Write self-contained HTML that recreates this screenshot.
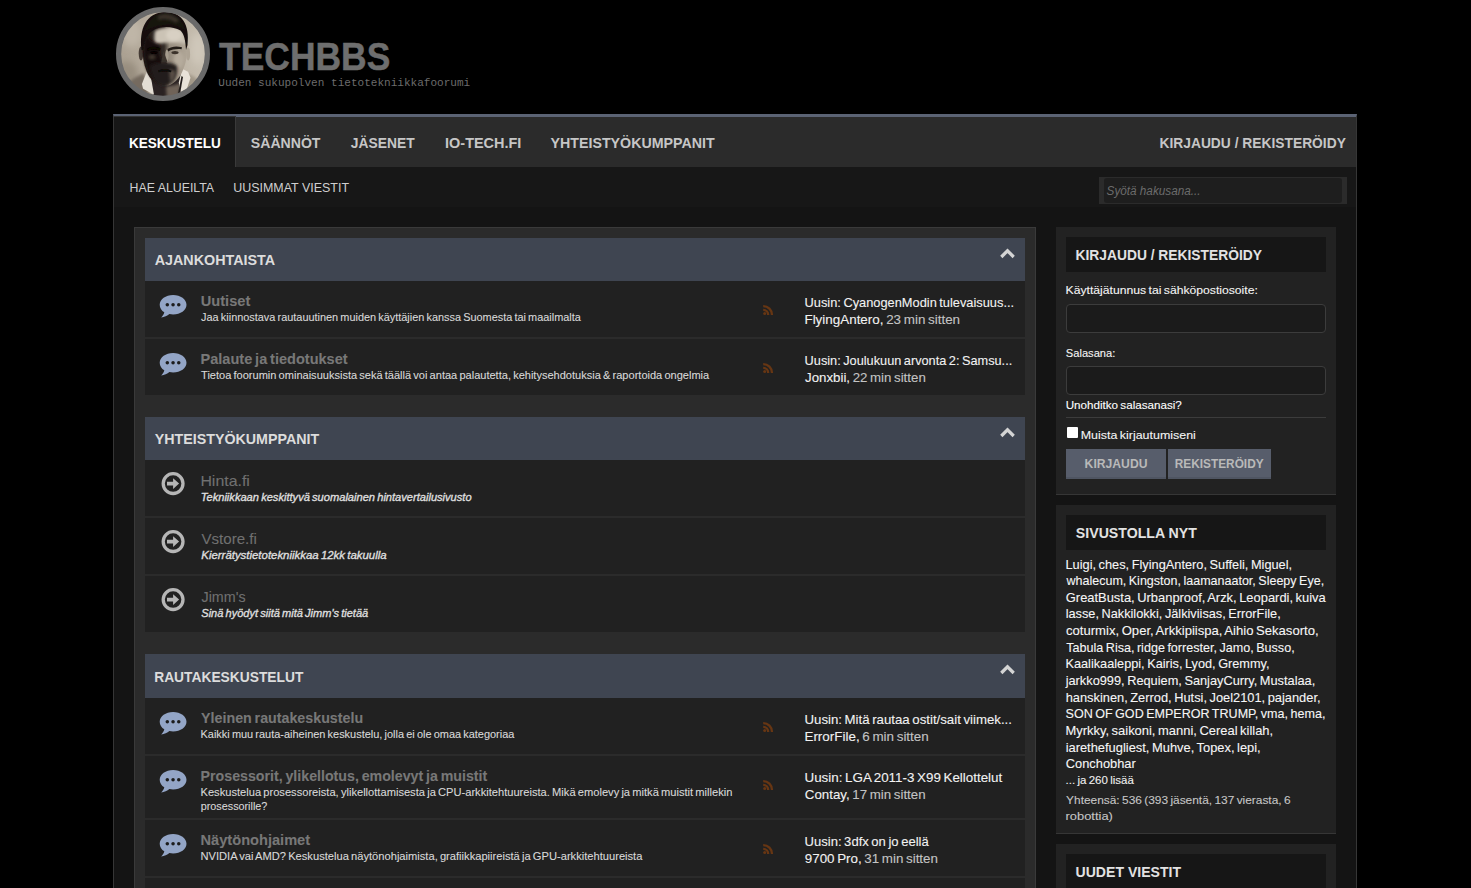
<!DOCTYPE html><html lang="fi"><head><meta charset="utf-8"><title>TechBBS</title><style>

html,body{margin:0;padding:0}
body{width:1471px;height:888px;overflow:hidden;background:#000;position:relative;font-family:"Liberation Sans", sans-serif;}
#pg{position:absolute;left:0;top:0;width:1471px;height:888px;overflow:hidden}
#pg>div,#pg>svg{position:absolute;display:block}
.t{position:absolute;white-space:nowrap;line-height:1;transform-origin:0 0;display:block}
.m{font-family:"Liberation Mono", monospace}
.l{word-spacing:-.08em;-webkit-text-stroke:.1px currentColor}

</style></head><body><div id="pg">
<div style="left:113px;top:114px;width:1244px;height:774px;background:#141414;border-top:3px solid #5b6374;box-sizing:border-box;border-left:1px solid #363636;border-right:1px solid #363636"></div>
<div style="left:114px;top:117px;width:1242px;height:50px;background:#2b2b2b;"></div>
<div style="left:114px;top:116px;width:122px;height:51px;background:#171717;border-top:1px solid #333;border-right:1px solid #3a3a3a;box-sizing:border-box"></div>
<div style="left:114px;top:167px;width:1242px;height:40px;background:#171717;"></div>
<div style="left:1099px;top:177px;width:248px;height:27px;background:#2b2b2b;"></div>
<div style="left:1104px;top:178px;width:238px;height:25px;background:#1e1e1e;border-radius:3px"></div>
<div style="left:134px;top:227px;width:902px;height:700px;background:#2b2b2b;border:1px solid #3a3a3a;box-sizing:border-box"></div>
<div style="left:145px;top:238px;width:880px;height:43px;background:#3f4551;"></div>
<div style="left:145px;top:281px;width:880px;height:56px;background:#212121;"></div>
<div style="left:145px;top:339px;width:880px;height:56px;background:#212121;"></div>
<div style="left:145px;top:417px;width:880px;height:43px;background:#3f4551;"></div>
<div style="left:145px;top:460px;width:880px;height:56px;background:#212121;"></div>
<div style="left:145px;top:518px;width:880px;height:56px;background:#212121;"></div>
<div style="left:145px;top:576px;width:880px;height:56px;background:#212121;"></div>
<div style="left:145px;top:654px;width:880px;height:44px;background:#3f4551;"></div>
<div style="left:145px;top:698px;width:880px;height:56px;background:#212121;"></div>
<div style="left:145px;top:756px;width:880px;height:62px;background:#212121;"></div>
<div style="left:145px;top:820px;width:880px;height:56px;background:#212121;"></div>
<div style="left:145px;top:878px;width:880px;height:20px;background:#212121;"></div>
<div style="left:1056px;top:227px;width:280px;height:267px;background:#222222;border-bottom:1px solid #363636"></div>
<div style="left:1066px;top:237px;width:260px;height:35px;background:#161616;"></div>
<div style="left:1066px;top:304px;width:260px;height:29px;background:#1b1b1b;border:1px solid #3c3c3c;border-radius:4px;box-sizing:border-box"></div>
<div style="left:1066px;top:366px;width:260px;height:29px;background:#1b1b1b;border:1px solid #3c3c3c;border-radius:4px;box-sizing:border-box"></div>
<div style="left:1066px;top:417px;width:260px;height:1px;background:#3c3c3c;"></div>
<div style="left:1067px;top:427px;width:11px;height:11px;background:#fff;border-radius:1px"></div>
<div style="left:1066px;top:449px;width:100px;height:30px;background:#575d6b;border-bottom:2px solid #4f5562;box-sizing:border-box"></div>
<div style="left:1168px;top:449px;width:103px;height:30px;background:#575d6b;border-bottom:2px solid #4f5562;box-sizing:border-box"></div>
<div style="left:1056px;top:505px;width:280px;height:328px;background:#222222;border-bottom:1px solid #363636"></div>
<div style="left:1066px;top:515px;width:260px;height:35px;background:#161616;"></div>
<div style="left:1056px;top:844px;width:280px;height:60px;background:#222222;border-bottom:1px solid #363636"></div>
<div style="left:1066px;top:854px;width:260px;height:35px;background:#161616;"></div>
<svg style="left:116px;top:7px" width="94" height="94" viewBox="0 0 94 94">
<defs>
<clipPath id="avc"><circle cx="47" cy="47" r="42.500"/></clipPath>
<filter id="fb1" x="-30%" y="-30%" width="160%" height="160%"><feGaussianBlur stdDeviation="0.700"/></filter>
<filter id="fb2" x="-30%" y="-30%" width="160%" height="160%"><feGaussianBlur stdDeviation="1.500"/></filter>
<filter id="fb3" x="-30%" y="-30%" width="160%" height="160%"><feGaussianBlur stdDeviation="3.500"/></filter>
<linearGradient id="bgg" x1="0" x2="1" y1="0" y2="0"><stop offset="0" stop-color="#a99f90"/><stop offset=".35" stop-color="#b5ab9c"/><stop offset="1" stop-color="#c8c0b2"/></linearGradient>
<linearGradient id="fcg" x1="0" x2="1" y1="0" y2="0"><stop offset="0" stop-color="#241e1a"/><stop offset=".48" stop-color="#332b26"/><stop offset=".6" stop-color="#968c7e"/><stop offset="1" stop-color="#b1a798"/></linearGradient>
</defs>
<g clip-path="url(#avc)">
<rect width="94" height="94" fill="url(#bgg)"/>
<ellipse cx="16" cy="26" rx="10" ry="14" fill="#bfb6a7" filter="url(#fb3)"/>
<ellipse cx="10" cy="68" rx="12" ry="14" fill="#988e7f" filter="url(#fb3)"/>
<ellipse cx="82" cy="42" rx="8" ry="16" fill="#cfc7ba" filter="url(#fb3)"/>
<!-- shoulders -->
<path d="M6 94c1-12 6-20 14-24l8-4 6 28z" fill="#746a5e" filter="url(#fb2)"/>
<path d="M68 65l7 3c8 3 11 12 13 26h-26z" fill="#a39989" filter="url(#fb2)"/>
<!-- neck / chest -->
<path d="M34 68l4 26h24l6-28z" fill="#2a2420" filter="url(#fb1)"/>
<path d="M50 79l1 15h10l5-19c-5 3-10 4-16 4z" fill="#6f6459" filter="url(#fb2)"/>
<!-- collar -->
<path d="M25.900 76.900l4.900-12.200 4.200 6.100 3 17-10.900-6.100z" fill="#e4ded4" filter="url(#fb1)"/>
<path d="M66 61.700l6.100 3 2.400 6.100-3.600 10.900-6.100 3.700-2-10z" fill="#e8e2d8" filter="url(#fb1)"/>
<path d="M62 87l3.500-18 1.500 1-3 17z" fill="#241f1b" filter="url(#fb1)"/>
<!-- ears -->
<ellipse cx="25" cy="46.500" rx="2.300" ry="7" fill="#453b34" filter="url(#fb1)"/>
<ellipse cx="72.200" cy="47" rx="1.900" ry="6.600" fill="#aea495" filter="url(#fb1)"/>
<!-- face -->
<path d="M26.500 40c0-14 9-24 22-24s23 10 23 24c0 8-1.500 16-4.500 23-3 8-10 16-18.500 16s-15-7-18-15c-3-7-4-15-4-24z" fill="url(#fcg)" filter="url(#fb1)"/>
<!-- forehead + cheek light -->
<path d="M39 24c6-4 18-5 27-1 3 4 4 9 4 14-9-2-20-2-31 1-1-5-1-10 0-14z" fill="#cbc3b5" filter="url(#fb2)"/>
<ellipse cx="58" cy="28" rx="8" ry="6" fill="#d8d0c3" filter="url(#fb2)"/>
<ellipse cx="63" cy="53" rx="5" ry="8.500" fill="#b5ab9c" filter="url(#fb2)"/>
<ellipse cx="51" cy="49" rx="1.800" ry="6.500" fill="#a69c8d" filter="url(#fb1)"/>
<!-- deep shadow on left half -->
<path d="M27.500 41c0-5 1-9 3-13l5 6 9 4-1 8 4 11-4 5 1 15c-6-2-11-8-14-16-2-6-3-13-3-20z" fill="#15110e" filter="url(#fb2)"/>
<ellipse cx="36" cy="50" rx="3.500" ry="2.500" fill="#40372f" filter="url(#fb2)"/>
<!-- brows / eyes -->
<path d="M31 41.800c4-2.600 9-2.600 13.500-.5l-.5 2.500c-4-1.500-8.500-1.500-12.500 0z" fill="#090706" filter="url(#fb1)"/>
<path d="M51.500 42c4-2.800 9.500-3.200 14.500-1.700l-.5 2c-4.500-.5-9 0-13.500 2.200z" fill="#221c18" filter="url(#fb1)"/>
<ellipse cx="38" cy="45.600" rx="3.600" ry="1.500" fill="#070605" filter="url(#fb1)"/>
<ellipse cx="59" cy="45.600" rx="3.600" ry="1.700" fill="#3a312a" filter="url(#fb1)"/>
<!-- nose -->
<path d="M47.500 44l-2.500 12.500 3.500 1.500 3.500-1.500-1-3z" fill="#3e352e" filter="url(#fb1)"/>
<ellipse cx="52.500" cy="55.500" rx="1.800" ry="1.400" fill="#978d7f" filter="url(#fb1)"/>
<!-- beard + mouth -->
<path d="M34 59c4-2.500 9-3.500 14.500-3.500s9.500 1 12.500 3.500c1 9-3 18-12.500 20-8 0-13.500-10-14.500-20z" fill="#241e1a" filter="url(#fb2)"/>
<path d="M53 62.500c3 0 5.500 1 6.500 2 0 5-2 9-5 11-1-4-1-9-1.500-13z" fill="#5a5046" filter="url(#fb2)"/>
<path d="M42 63.500c4-1.800 9.500-1.800 13.500 0l-.5 1.800c-4-1-8.500-1-12.500 0z" fill="#0d0a09" filter="url(#fb1)"/>
<!-- hair -->
<path d="M25.500 43c-2.500-22 5-37 23-38 17-.5 25.500 12 23 33l-1.500 5c-.5-10-2-16-5.500-19.500-6-3.500-15-4.500-22-2.500-8 2-14 9-15.500 22z" fill="#14100d" filter="url(#fb1)"/>
<path d="M29 24c4-12 11-18 20-18 10 0 17 6 20 17-6-4.500-13-6-20-5-8 0-15 3-20 6z" fill="#191411" filter="url(#fb1)"/>
<path d="M42 9c6-3 15-2 21 4l-3 3c-5-4-12-5-18-3z" fill="#3a322b" filter="url(#fb2)"/>
</g>
<circle cx="47" cy="47" r="44.400" fill="none" stroke="#6a6a6a" stroke-width="5.200"/>
</svg>
<svg style="left:996px;top:244px" width="24" height="20" viewBox="996 244 24 20">
<path d="M1001.300 257l6.200-6.200 6.200 6.200" fill="none" stroke="#d4d4d4" stroke-width="3.200" stroke-linejoin="miter"/>
</svg>
<svg style="left:155px;top:291px" width="36" height="28" viewBox="155 291 36 28">
<path fill="#93a5c6" d="M173.1 294.90c7.4 0 13.4 4.350 13.4 9.750s-6 9.750-13.4 9.750c-1.3 0-2.5-.1-3.7-.4-2.1 1.8-5 3.2-8.2 3.5 1.5-1.4 2.7-3.2 3.1-5.2-2.8-1.8-4.6-4.500-4.600-7.650 0-5.400 6-9.750 13.400-9.750z"/>
<circle cx="167.3" cy="304.7" r="1.75" fill="#1c1c1c"/><circle cx="173.05" cy="304.7" r="1.75" fill="#1c1c1c"/><circle cx="178.75" cy="304.7" r="1.75" fill="#1c1c1c"/>
</svg>
<svg style="left:760px;top:301px" width="18" height="18" viewBox="760 301 18 18">
<g fill="none" stroke="#673613" stroke-width="2.300">
<path d="M763.2 306.10a8.800 8.800 0 0 1 8.800 8.800"/>
<path d="M763.2 309.90a5 5 0 0 1 5 5"/>
</g><circle cx="764.7" cy="313.40" r="1.500" fill="#673613"/>
</svg>
<svg style="left:155px;top:349px" width="36" height="28" viewBox="155 349 36 28">
<path fill="#93a5c6" d="M173.1 352.90c7.4 0 13.4 4.350 13.4 9.750s-6 9.750-13.4 9.750c-1.3 0-2.5-.1-3.7-.4-2.1 1.8-5 3.2-8.2 3.5 1.5-1.4 2.7-3.2 3.1-5.2-2.8-1.8-4.6-4.500-4.600-7.650 0-5.400 6-9.750 13.400-9.750z"/>
<circle cx="167.3" cy="362.7" r="1.75" fill="#1c1c1c"/><circle cx="173.05" cy="362.7" r="1.75" fill="#1c1c1c"/><circle cx="178.75" cy="362.7" r="1.75" fill="#1c1c1c"/>
</svg>
<svg style="left:760px;top:359px" width="18" height="18" viewBox="760 359 18 18">
<g fill="none" stroke="#673613" stroke-width="2.300">
<path d="M763.2 364.10a8.800 8.800 0 0 1 8.800 8.800"/>
<path d="M763.2 367.90a5 5 0 0 1 5 5"/>
</g><circle cx="764.7" cy="371.40" r="1.500" fill="#673613"/>
</svg>
<svg style="left:996px;top:423px" width="24" height="20" viewBox="996 423 24 20">
<path d="M1001.300 436l6.200-6.200 6.200 6.200" fill="none" stroke="#d4d4d4" stroke-width="3.200" stroke-linejoin="miter"/>
</svg>
<svg style="left:158px;top:468px" width="30" height="32" viewBox="158 468 30 32">
<circle cx="173.1" cy="483.6" r="9.9" fill="none" stroke="#b6b6b6" stroke-width="3.3"/>
<path fill="#b6b6b6" d="M167 481.8h6.100v-3.500l6 5.300-6 5.300v-3.500h-6.100z"/>
</svg>
<svg style="left:158px;top:526px" width="30" height="32" viewBox="158 526 30 32">
<circle cx="173.1" cy="541.6" r="9.9" fill="none" stroke="#b6b6b6" stroke-width="3.3"/>
<path fill="#b6b6b6" d="M167 539.8000000000001h6.100v-3.500l6 5.300-6 5.300v-3.500h-6.100z"/>
</svg>
<svg style="left:158px;top:584px" width="30" height="32" viewBox="158 584 30 32">
<circle cx="173.1" cy="599.6" r="9.9" fill="none" stroke="#b6b6b6" stroke-width="3.3"/>
<path fill="#b6b6b6" d="M167 597.8000000000001h6.100v-3.500l6 5.300-6 5.300v-3.500h-6.100z"/>
</svg>
<svg style="left:996px;top:660px" width="24" height="20" viewBox="996 660 24 20">
<path d="M1001.300 673l6.200-6.200 6.200 6.200" fill="none" stroke="#d4d4d4" stroke-width="3.200" stroke-linejoin="miter"/>
</svg>
<svg style="left:155px;top:708px" width="36" height="28" viewBox="155 708 36 28">
<path fill="#93a5c6" d="M173.1 711.90c7.4 0 13.4 4.350 13.4 9.750s-6 9.750-13.4 9.750c-1.3 0-2.5-.1-3.7-.4-2.1 1.8-5 3.2-8.2 3.5 1.5-1.4 2.7-3.2 3.1-5.2-2.8-1.8-4.6-4.500-4.600-7.650 0-5.400 6-9.750 13.400-9.750z"/>
<circle cx="167.3" cy="721.7" r="1.75" fill="#1c1c1c"/><circle cx="173.05" cy="721.7" r="1.75" fill="#1c1c1c"/><circle cx="178.75" cy="721.7" r="1.75" fill="#1c1c1c"/>
</svg>
<svg style="left:760px;top:718px" width="18" height="18" viewBox="760 718 18 18">
<g fill="none" stroke="#673613" stroke-width="2.300">
<path d="M763.2 723.10a8.800 8.800 0 0 1 8.800 8.800"/>
<path d="M763.2 726.90a5 5 0 0 1 5 5"/>
</g><circle cx="764.7" cy="730.40" r="1.500" fill="#673613"/>
</svg>
<svg style="left:155px;top:766px" width="36" height="28" viewBox="155 766 36 28">
<path fill="#93a5c6" d="M173.1 769.90c7.4 0 13.4 4.350 13.4 9.750s-6 9.750-13.4 9.750c-1.3 0-2.5-.1-3.7-.4-2.1 1.8-5 3.2-8.2 3.5 1.5-1.4 2.7-3.2 3.1-5.2-2.8-1.8-4.6-4.500-4.600-7.650 0-5.400 6-9.750 13.400-9.750z"/>
<circle cx="167.3" cy="779.7" r="1.75" fill="#1c1c1c"/><circle cx="173.05" cy="779.7" r="1.75" fill="#1c1c1c"/><circle cx="178.75" cy="779.7" r="1.75" fill="#1c1c1c"/>
</svg>
<svg style="left:760px;top:776px" width="18" height="18" viewBox="760 776 18 18">
<g fill="none" stroke="#673613" stroke-width="2.300">
<path d="M763.2 781.10a8.800 8.800 0 0 1 8.800 8.800"/>
<path d="M763.2 784.90a5 5 0 0 1 5 5"/>
</g><circle cx="764.7" cy="788.40" r="1.500" fill="#673613"/>
</svg>
<svg style="left:155px;top:830px" width="36" height="28" viewBox="155 830 36 28">
<path fill="#93a5c6" d="M173.1 833.90c7.4 0 13.4 4.350 13.4 9.750s-6 9.750-13.4 9.750c-1.3 0-2.5-.1-3.7-.4-2.1 1.8-5 3.2-8.2 3.5 1.5-1.4 2.7-3.2 3.1-5.2-2.8-1.8-4.6-4.500-4.600-7.650 0-5.400 6-9.750 13.400-9.750z"/>
<circle cx="167.3" cy="843.7" r="1.75" fill="#1c1c1c"/><circle cx="173.05" cy="843.7" r="1.75" fill="#1c1c1c"/><circle cx="178.75" cy="843.7" r="1.75" fill="#1c1c1c"/>
</svg>
<svg style="left:760px;top:840px" width="18" height="18" viewBox="760 840 18 18">
<g fill="none" stroke="#673613" stroke-width="2.300">
<path d="M763.2 845.10a8.800 8.800 0 0 1 8.800 8.800"/>
<path d="M763.2 848.90a5 5 0 0 1 5 5"/>
</g><circle cx="764.7" cy="852.40" r="1.500" fill="#673613"/>
</svg>
<span class="t" style="left:219px;top:38.40px;transform:translateX(0.08px) scaleX(0.9321);font-size:38px;color:#6e6e6e;font-weight:bold;-webkit-text-stroke:.5px #6e6e6e;">TECHBBS</span>
<span class="t m" style="left:218px;top:77.70px;transform:translateX(0.26px) scaleX(1.0046);font-size:11px;color:#6c6c6c;">Uuden sukupolven tietotekniikkafoorumi</span>
<span class="t" style="left:128px;top:134.90px;transform:translateX(0.97px) scaleX(0.9040);font-size:15px;color:#fff;font-weight:bold;">KESKUSTELU</span>
<span class="t" style="left:250px;top:134.90px;transform:translateX(0.85px) scaleX(0.9385);font-size:15px;color:#c6c6c6;font-weight:bold;">SÄÄNNÖT</span>
<span class="t" style="left:350px;top:134.90px;transform:translateX(0.85px) scaleX(0.9220);font-size:15px;color:#c6c6c6;font-weight:bold;">JÄSENET</span>
<span class="t" style="left:445px;top:134.90px;transform:translateX(0.10px) scaleX(0.9629);font-size:15px;color:#c6c6c6;font-weight:bold;">IO-TECH.FI</span>
<span class="t" style="left:550px;top:134.90px;transform:translateX(0.54px) scaleX(0.9483);font-size:15px;color:#c6c6c6;font-weight:bold;">YHTEISTYÖKUMPPANIT</span>
<span class="t" style="left:1159px;top:134.90px;transform:translateX(0.47px) scaleX(0.9203);font-size:15px;color:#c6c6c6;font-weight:bold;">KIRJAUDU / REKISTERÖIDY</span>
<span class="t" style="left:129px;top:181.00px;transform:translateX(0.53px) scaleX(0.9491);font-size:13px;color:#cfcfcf;">HAE ALUEILTA</span>
<span class="t" style="left:233px;top:181.00px;transform:translateX(0.20px) scaleX(0.9580);font-size:13px;color:#cfcfcf;">UUSIMMAT VIESTIT</span>
<span class="t" style="left:1106px;top:184.80px;transform:translateX(0.55px) scaleX(0.9783);font-size:12px;color:#6c6c6c;font-style:italic;">Syötä hakusana...</span>
<span class="t" style="left:154px;top:252.00px;transform:translateX(0.68px) scaleX(0.9549);font-size:15px;color:#dcdcdc;font-weight:bold;">AJANKOHTAISTA</span>
<span class="t l" style="left:200px;top:292.90px;transform:translateX(0.75px) scaleX(0.9737);font-size:15px;color:#787878;font-weight:bold;">Uutiset</span>
<span class="t l" style="left:201px;top:311.90px;transform:translateX(0.09px) scaleX(0.9913);font-size:11px;color:#d8d8d8;">Jaa kiinnostava rautauutinen muiden käyttäjien kanssa Suomesta tai maailmalta</span>
<span class="t l" style="left:804px;top:295.90px;transform:translateX(0.55px) scaleX(0.9859);font-size:13px;color:#f2f2f2;">Uusin: CyanogenModin tulevaisuus...</span>
<span class="t l" style="left:804px;top:312.90px;transform:translateX(0.43px) scaleX(1.0321);font-size:13px;color:#f2f2f2;"><span style="color:#f2f2f2">FlyingAntero, </span><span style="color:#c4c4c4">23 min sitten</span></span>
<span class="t l" style="left:200px;top:350.90px;transform:translateX(0.56px) scaleX(0.9684);font-size:15px;color:#787878;font-weight:bold;">Palaute ja tiedotukset</span>
<span class="t l" style="left:201px;top:369.90px;transform:translateX(0.07px) scaleX(1.0030);font-size:11px;color:#d8d8d8;">Tietoa foorumin ominaisuuksista sekä täällä voi antaa palautetta, kehitysehdotuksia &amp; raportoida ongelmia</span>
<span class="t l" style="left:804px;top:353.90px;transform:translateX(0.61px) scaleX(0.9797);font-size:13px;color:#f2f2f2;">Uusin: Joulukuun arvonta 2: Samsu...</span>
<span class="t l" style="left:805px;top:370.90px;transform:translateX(0.03px) scaleX(1.0207);font-size:13px;color:#f2f2f2;"><span style="color:#f2f2f2">Jonxbii, </span><span style="color:#c4c4c4">22 min sitten</span></span>
<span class="t" style="left:154px;top:431.00px;transform:translateX(0.64px) scaleX(0.9513);font-size:15px;color:#dcdcdc;font-weight:bold;">YHTEISTYÖKUMPPANIT</span>
<span class="t l" style="left:200px;top:472.90px;transform:translateX(0.38px) scaleX(1.0604);font-size:15px;color:#707070;">Hinta.fi</span>
<span class="t l" style="left:200px;top:491.90px;transform:translateX(0.75px) scaleX(1.0090);font-size:11px;color:#e0e0e0;font-style:italic;-webkit-text-stroke:.3px #e0e0e0;">Tekniikkaan keskittyvä suomalainen hintavertailusivusto</span>
<span class="t l" style="left:201px;top:530.90px;transform:translateX(0.51px) scaleX(1.0060);font-size:15px;color:#707070;">Vstore.fi</span>
<span class="t l" style="left:201px;top:549.90px;transform:translateX(0.28px) scaleX(1.0377);font-size:11px;color:#e0e0e0;font-style:italic;-webkit-text-stroke:.3px #e0e0e0;">Kierrätystietotekniikkaa 12kk takuulla</span>
<span class="t l" style="left:201px;top:588.90px;transform:translateX(0.55px) scaleX(0.9531);font-size:15px;color:#707070;">Jimm&#x27;s</span>
<span class="t l" style="left:201px;top:607.90px;transform:translateX(0.27px) scaleX(1.0029);font-size:11px;color:#e0e0e0;font-style:italic;-webkit-text-stroke:.3px #e0e0e0;">Sinä hyödyt siitä mitä Jimm&#x27;s tietää</span>
<span class="t" style="left:154px;top:668.80px;transform:translateX(0.20px) scaleX(0.9195);font-size:15px;color:#dcdcdc;font-weight:bold;">RAUTAKESKUSTELUT</span>
<span class="t l" style="left:201px;top:709.90px;transform:translateX(0.10px) scaleX(0.9499);font-size:15px;color:#787878;font-weight:bold;">Yleinen rautakeskustelu</span>
<span class="t l" style="left:200px;top:728.90px;transform:translateX(0.51px) scaleX(0.9958);font-size:11px;color:#d8d8d8;">Kaikki muu rauta-aiheinen keskustelu, jolla ei ole omaa kategoriaa</span>
<span class="t l" style="left:804px;top:712.90px;transform:translateX(0.50px) scaleX(1.0172);font-size:13px;color:#f2f2f2;">Uusin: Mitä rautaa ostit/sait viimek...</span>
<span class="t l" style="left:804px;top:729.90px;transform:translateX(0.43px) scaleX(1.0323);font-size:13px;color:#f2f2f2;"><span style="color:#f2f2f2">ErrorFile, </span><span style="color:#c4c4c4">6 min sitten</span></span>
<span class="t l" style="left:200px;top:767.90px;transform:translateX(0.58px) scaleX(0.9465);font-size:15px;color:#787878;font-weight:bold;">Prosessorit, ylikellotus, emolevyt ja muistit</span>
<span class="t l" style="left:200px;top:786.90px;transform:translateX(0.49px) scaleX(1.0111);font-size:11px;color:#d8d8d8;">Keskustelua prosessoreista, ylikellottamisesta ja CPU-arkkitehtuureista. Mikä emolevy ja mitkä muistit millekin</span>
<span class="t l" style="left:200px;top:800.50px;transform:translateX(0.73px) scaleX(0.9813);font-size:11px;color:#d8d8d8;">prosessorille?</span>
<span class="t l" style="left:804px;top:770.90px;transform:translateX(0.47px) scaleX(1.0292);font-size:13px;color:#f2f2f2;">Uusin: LGA 2011-3 X99 Kellottelut</span>
<span class="t l" style="left:804px;top:787.90px;transform:translateX(0.81px) scaleX(1.0229);font-size:13px;color:#f2f2f2;"><span style="color:#f2f2f2">Contay, </span><span style="color:#c4c4c4">17 min sitten</span></span>
<span class="t l" style="left:200px;top:831.90px;transform:translateX(0.56px) scaleX(0.9736);font-size:15px;color:#787878;font-weight:bold;">Näytönohjaimet</span>
<span class="t l" style="left:200px;top:850.90px;transform:translateX(0.48px) scaleX(1.0125);font-size:11px;color:#d8d8d8;">NVIDIA vai AMD? Keskustelua näytönohjaimista, grafiikkapiireistä ja GPU-arkkitehtuureista</span>
<span class="t l" style="left:804px;top:834.90px;transform:translateX(0.55px) scaleX(1.0038);font-size:13px;color:#f2f2f2;">Uusin: 3dfx on jo eellä</span>
<span class="t l" style="left:804px;top:851.90px;transform:translateX(0.76px) scaleX(1.0281);font-size:13px;color:#f2f2f2;"><span style="color:#f2f2f2">9700 Pro, </span><span style="color:#c4c4c4">31 min sitten</span></span>
<span class="t" style="left:1075px;top:247.20px;transform:translateX(0.52px) scaleX(0.9205);font-size:15px;color:#e2e2e2;font-weight:bold;">KIRJAUDU / REKISTERÖIDY</span>
<span class="t l" style="left:1065px;top:284.90px;transform:translateX(0.61px) scaleX(1.0583);font-size:11.5px;color:#f4f4f4;">Käyttäjätunnus tai sähköpostiosoite:</span>
<span class="t l" style="left:1065px;top:348.20px;transform:translateX(0.82px) scaleX(0.9676);font-size:11.5px;color:#f4f4f4;">Salasana:</span>
<span class="t l" style="left:1065px;top:400.10px;transform:translateX(0.64px) scaleX(1.0123);font-size:11.5px;color:#fff;">Unohditko salasanasi?</span>
<span class="t l" style="left:1080px;top:430.00px;transform:translateX(0.68px) scaleX(1.0821);font-size:11.5px;color:#f4f4f4;">Muista kirjautumiseni</span>
<span class="t" style="left:1084px;top:457.00px;transform:translateX(0.59px) scaleX(0.9366);font-size:13px;color:#b9b9b9;font-weight:bold;">KIRJAUDU</span>
<span class="t" style="left:1174px;top:457.00px;transform:translateX(0.76px) scaleX(0.9113);font-size:13px;color:#b9b9b9;font-weight:bold;">REKISTERÖIDY</span>
<span class="t" style="left:1075px;top:525.20px;transform:translateX(0.85px) scaleX(0.9426);font-size:15px;color:#e2e2e2;font-weight:bold;">SIVUSTOLLA NYT</span>
<span class="t l" style="left:1065px;top:557.50px;transform:translateX(0.45px) scaleX(0.9836);font-size:13px;color:#f6f6f6;">Luigi, ches, FlyingAntero, Suffeli, Miguel,</span>
<span class="t l" style="left:1066px;top:574.20px;transform:translateX(0.46px) scaleX(0.9630);font-size:13px;color:#f6f6f6;">whalecum, Kingston, laamanaator, Sleepy Eye,</span>
<span class="t l" style="left:1065px;top:590.80px;transform:translateX(0.80px) scaleX(0.9929);font-size:13px;color:#f6f6f6;">GreatBusta, Urbanproof, Arzk, Leopardi, kuiva</span>
<span class="t l" style="left:1065px;top:607.40px;transform:translateX(0.67px) scaleX(0.9801);font-size:13px;color:#f6f6f6;">lasse, Nakkilokki, Jälkiviisas, ErrorFile,</span>
<span class="t l" style="left:1066px;top:624.10px;transform:translateX(0.02px) scaleX(1.0066);font-size:13px;color:#f6f6f6;">coturmix, Oper, Arkkipiispa, Aihio Sekasorto,</span>
<span class="t l" style="left:1066px;top:640.70px;transform:translateX(0.28px) scaleX(0.9670);font-size:13px;color:#f6f6f6;">Tabula Risa, ridge forrester, Jamo, Busso,</span>
<span class="t l" style="left:1065px;top:657.30px;transform:translateX(0.47px) scaleX(0.9782);font-size:13px;color:#f6f6f6;">Kaalikaaleppi, Kairis, Lyod, Gremmy,</span>
<span class="t l" style="left:1065px;top:674.00px;transform:translateX(0.66px) scaleX(0.9831);font-size:13px;color:#f6f6f6;">jarkko999, Requiem, SanjayCurry, Mustalaa,</span>
<span class="t l" style="left:1065px;top:690.60px;transform:translateX(0.66px) scaleX(0.9872);font-size:13px;color:#f6f6f6;">hanskinen, Zerrod, Hutsi, Joel2101, pajander,</span>
<span class="t l" style="left:1065px;top:707.30px;transform:translateX(0.54px) scaleX(0.9651);font-size:13px;color:#f6f6f6;">SON OF GOD EMPEROR TRUMP, vma, hema,</span>
<span class="t l" style="left:1065px;top:723.90px;transform:translateX(0.46px) scaleX(0.9950);font-size:13px;color:#f6f6f6;">Myrkky, saikoni, manni, Cereal killah,</span>
<span class="t l" style="left:1065px;top:740.50px;transform:translateX(0.63px) scaleX(0.9911);font-size:13px;color:#f6f6f6;">iarethefugliest, Muhve, Topex, lepi,</span>
<span class="t l" style="left:1065px;top:757.20px;transform:translateX(0.84px) scaleX(0.9856);font-size:13px;color:#f6f6f6;">Conchobhar</span>
<span class="t l" style="left:1065px;top:774.90px;transform:translateX(0.59px) scaleX(1.0003);font-size:11.5px;color:#f0f0f0;">... ja 260 lisää</span>
<span class="t l" style="left:1066px;top:794.90px;transform:translateX(0.08px) scaleX(1.0347);font-size:11.5px;color:#c6c6c6;">Yhteensä: 536 (393 jäsentä, 137 vierasta, 6</span>
<span class="t l" style="left:1065px;top:810.80px;transform:translateX(0.56px) scaleX(1.1210);font-size:11.5px;color:#c6c6c6;">robottia)</span>
<span class="t" style="left:1075px;top:864.20px;transform:translateX(0.57px) scaleX(0.9370);font-size:15px;color:#e2e2e2;font-weight:bold;">UUDET VIESTIT</span>
</div></body></html>
